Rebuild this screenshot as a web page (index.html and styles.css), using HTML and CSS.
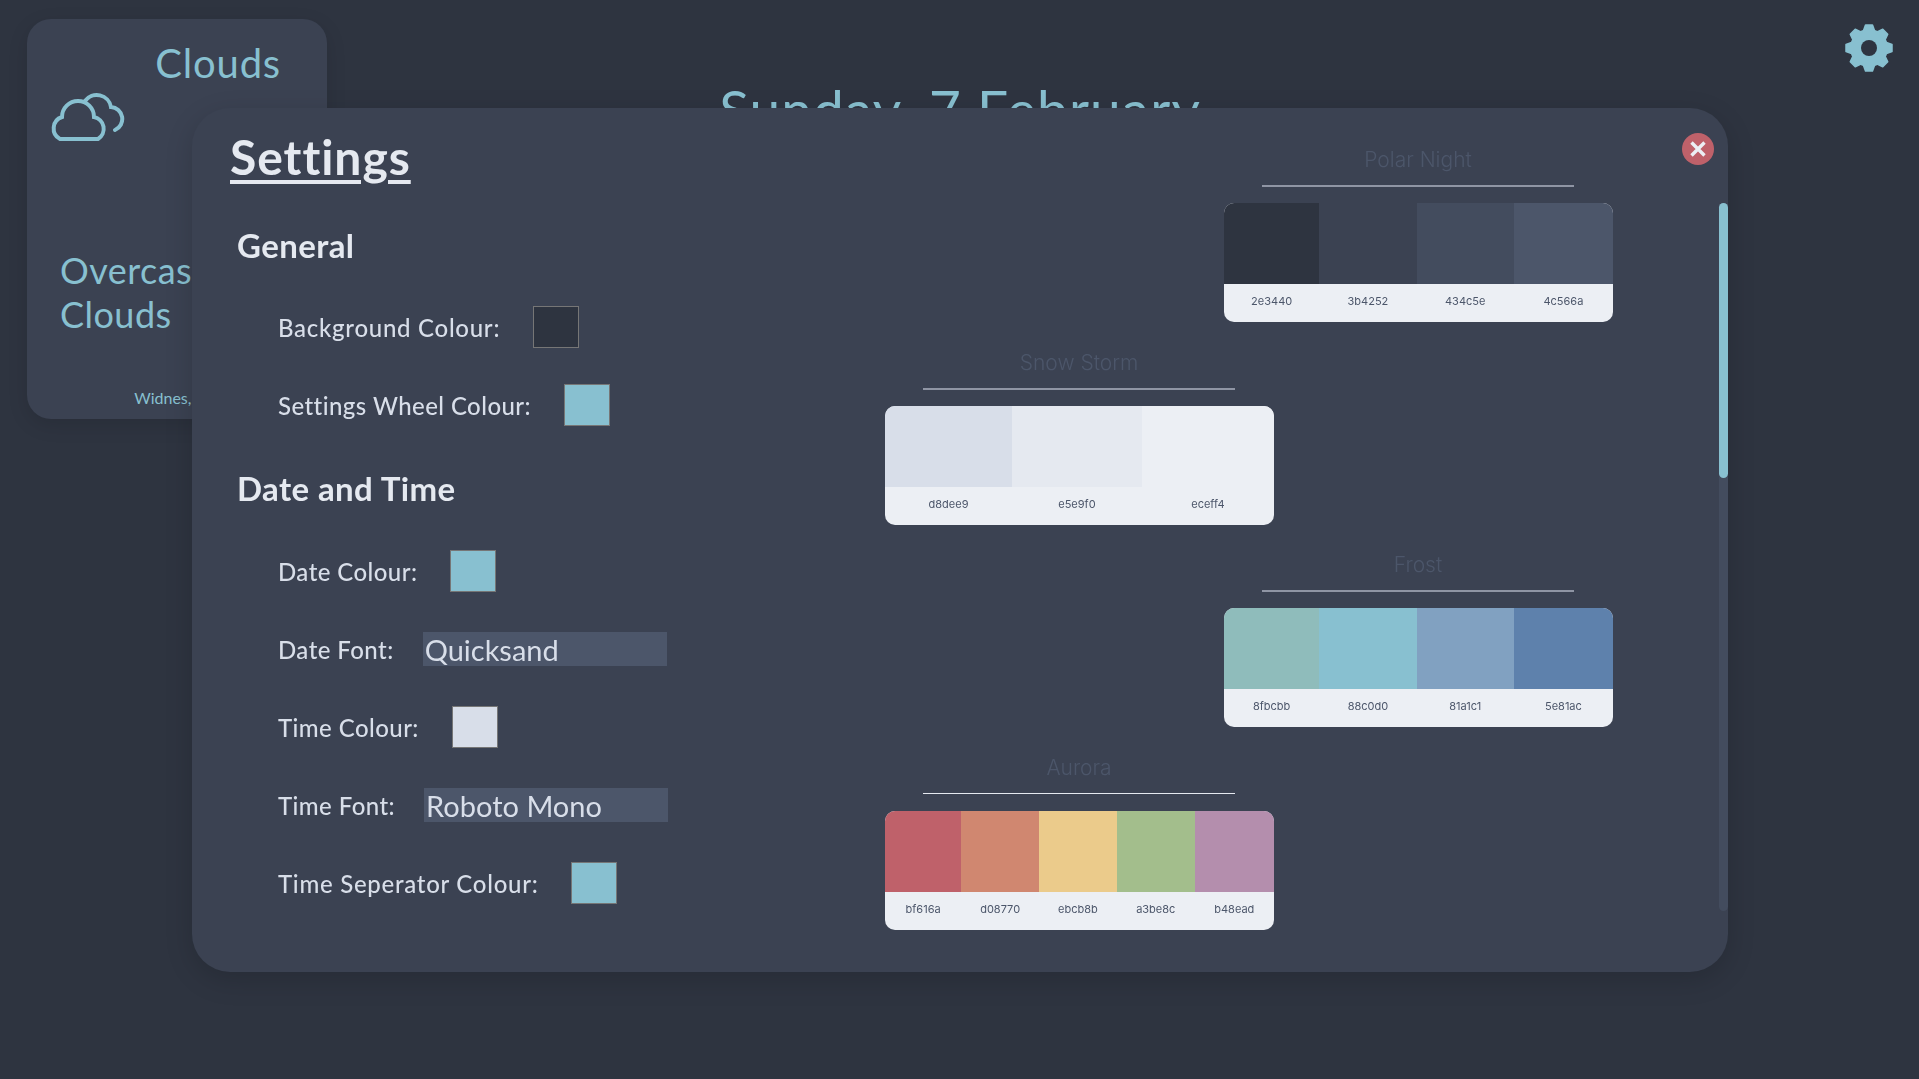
FILE: index.html
```html
<!DOCTYPE html>
<html lang="en">
<head>
    <meta charset="UTF-8">
    <meta name="viewport" content="width=device-width, initial-scale=1.0">
    <title>Weather Dashboard</title>
    <link rel="stylesheet" href="styles.css">
</head>
<body>
    <div id="dashboard">
        <div class="weather-card">
            <div class="weather-title">Clouds</div>
            <svg class="weather-icon" viewBox="0 0 80 52" width="80" height="52" fill="none" stroke="#88c0d0" stroke-width="4" stroke-linecap="round">
                <path d="M13 46 H51 A12 12 0 0 0 47 24 A16 16 0 0 0 15 24 A12 12 0 0 0 13 46 Z"/>
                <path d="M38 8 A14.5 14.5 0 0 1 64 14 A12 12 0 0 1 68 37"/>
            </svg>
            <div class="weather-desc">Overcast Clouds</div>
            <div class="weather-place">Widnes, UK</div>
        </div>
        <div class="date">Sunday, 7 February</div>
        <button class="gear-btn" aria-label="Settings">
            <svg viewBox="0 0 48 48" width="48" height="48">
                <defs>
                    <path id="tooth" d="M20.5 1 h7 l2.5 7 h-12 z" stroke="#88c0d0" stroke-width="1.5" stroke-linejoin="round"/>
                </defs>
                <g fill="#88c0d0">
                    <circle cx="24" cy="24" r="19"/>
                    <use href="#tooth"/>
                    <use href="#tooth" transform="rotate(45 24 24)"/>
                    <use href="#tooth" transform="rotate(90 24 24)"/>
                    <use href="#tooth" transform="rotate(135 24 24)"/>
                    <use href="#tooth" transform="rotate(180 24 24)"/>
                    <use href="#tooth" transform="rotate(225 24 24)"/>
                    <use href="#tooth" transform="rotate(270 24 24)"/>
                    <use href="#tooth" transform="rotate(315 24 24)"/>
                </g>
                <circle cx="24" cy="24" r="8" fill="#2e3440"/>
            </svg>
        </button>
    </div>

    <div id="settings">
        <div class="settings-left">
            <h1>Settings</h1>

            <h2>General</h2>
            <div class="rows">
                <div class="row">
                    <label class="wide">Background Colour:</label>
                    <input type="color" value="#2e3440">
                </div>
                <div class="row">
                    <label>Settings Wheel Colour:</label>
                    <input type="color" value="#88c0d0">
                </div>
            </div>

            <h2>Date and Time</h2>
            <div class="rows">
                <div class="row">
                    <label>Date Colour:</label>
                    <input type="color" value="#88c0d0">
                </div>
                <div class="row">
                    <label>Date Font:</label>
                    <input type="text" value="Quicksand">
                </div>
                <div class="row">
                    <label>Time Colour:</label>
                    <input type="color" value="#d8dee9">
                </div>
                <div class="row">
                    <label>Time Font:</label>
                    <input type="text" value="Roboto Mono">
                </div>
                <div class="row">
                    <label class="wide">Time Seperator Colour:</label>
                    <input type="color" value="#88c0d0">
                </div>
            </div>
        </div>

        <div class="palettes">
            <div class="palette right">
                <h3>Polar Night</h3>
                <div class="rule"></div>
                <div class="colours">
                    <div class="colour"><div class="chip c-2e3440"></div><span>2e3440</span></div>
                    <div class="colour"><div class="chip c-3b4252"></div><span>3b4252</span></div>
                    <div class="colour"><div class="chip c-434c5e"></div><span>434c5e</span></div>
                    <div class="colour"><div class="chip c-4c566a"></div><span>4c566a</span></div>
                </div>
            </div>
            <div class="palette">
                <h3>Snow Storm</h3>
                <div class="rule"></div>
                <div class="colours">
                    <div class="colour"><div class="chip c-d8dee9"></div><span>d8dee9</span></div>
                    <div class="colour"><div class="chip c-e5e9f0"></div><span>e5e9f0</span></div>
                    <div class="colour"><div class="chip c-eceff4"></div><span>eceff4</span></div>
                </div>
            </div>
            <div class="palette right">
                <h3>Frost</h3>
                <div class="rule"></div>
                <div class="colours">
                    <div class="colour"><div class="chip c-8fbcbb"></div><span>8fbcbb</span></div>
                    <div class="colour"><div class="chip c-88c0d0"></div><span>88c0d0</span></div>
                    <div class="colour"><div class="chip c-81a1c1"></div><span>81a1c1</span></div>
                    <div class="colour"><div class="chip c-5e81ac"></div><span>5e81ac</span></div>
                </div>
            </div>
            <div class="palette">
                <h3>Aurora</h3>
                <div class="rule"></div>
                <div class="colours">
                    <div class="colour"><div class="chip c-bf616a"></div><span>bf616a</span></div>
                    <div class="colour"><div class="chip c-d08770"></div><span>d08770</span></div>
                    <div class="colour"><div class="chip c-ebcb8b"></div><span>ebcb8b</span></div>
                    <div class="colour"><div class="chip c-a3be8c"></div><span>a3be8c</span></div>
                    <div class="colour"><div class="chip c-b48ead"></div><span>b48ead</span></div>
                </div>
            </div>
        </div>

        <button class="close-btn" aria-label="Close">
            <svg viewBox="0 0 16 16" width="16" height="16" stroke="#eceff4" stroke-width="3.4">
                <path d="M1.5 1.5 L14.5 14.5 M14.5 1.5 L1.5 14.5"/>
            </svg>
        </button>
        <div class="scroll-track"><div class="scroll-thumb"></div></div>
    </div>
</body>
</html>
```

FILE: styles.css
```css
* {
    box-sizing: border-box;
}
body {
    margin: 0;
    height: 100vh;
    overflow: hidden;
    background-color: #2e3440;
    font-family: 'Lato', 'Noto Sans', sans-serif;
    color: #88c0d0;
}
#dashboard {
    display: grid;
    grid-template-columns: 1fr auto 1fr;
    align-items: start;
    padding: 19px 26px 0 27px;
}
.weather-card {
    display: flex;
    flex-direction: column;
    width: 300px;
    height: 400px;
    padding: 20px 0 0 23px;
    background-color: #3b4252;
    border-radius: 24px;
    box-shadow: 0 6px 20px rgba(0, 0, 0, 0.12);
}
.weather-title {
    align-self: flex-end;
    margin-right: 46px;
    font-size: 40px;
    line-height: 48px;
    letter-spacing: 0.02em;
}
.weather-icon {
    flex: none;
    margin: 6px 0 0 -3px;
}
.weather-desc {
    width: 190px;
    margin: 103px 0 0 10px;
    font-size: 36px;
    line-height: 44px;
    letter-spacing: 0.013em;
}
.weather-place {
    margin: 52px 2px 0 -23px;
    font-size: 16px;
    text-align: center;
}
.date {
    margin-top: 56px;
    font-size: 55px;
    line-height: 68px;
    letter-spacing: 0.02em;
}
.gear-btn {
    justify-self: end;
    margin-top: 5px;
    padding: 0;
    border: none;
    background: none;
}
.gear-btn svg {
    display: block;
}

/* settings modal */
#settings {
    position: fixed;
    left: 192px;
    top: 108px;
    width: 1536px;
    height: 864px;
    display: flex;
    background-color: #3b4252;
    border-radius: 38px;
    box-shadow: 0 8px 28px rgba(0, 0, 0, 0.16);
    color: #d8dee9;
}
.settings-left {
    width: 693px;
    padding: 19px 0 0 38px;
}
h1 {
    display: inline-block;
    margin: 0 0 38px;
    font-size: 48px;
    line-height: 60px;
    font-weight: 700;
    letter-spacing: 0.02em;
    color: #e5e9f0;
    text-decoration: underline;
    text-decoration-thickness: 4px;
    text-underline-offset: 5px;
}
h2 {
    margin: 0 0 41px 7px;
    font-size: 33px;
    line-height: 40px;
    font-weight: 700;
    letter-spacing: 0.012em;
    color: #e5e9f0;
}
h2 + .rows + h2 {
    margin-bottom: 42px;
}
.rows {
    display: flex;
    flex-direction: column;
    gap: 36px;
    margin: 0 0 42px 48px;
}
.row {
    display: flex;
    align-items: center;
    gap: 33px;
    height: 42px;
}
label {
    font-size: 24px;
    font-weight: 500;
    letter-spacing: 0.018em;
}
label.wide {
    letter-spacing: 0.03em;
}
input[type="color"] {
    width: 46px;
    height: 42px;
    padding: 0;
    border: 1px solid #767676;
    background: none;
}
input[type="color"]::-webkit-color-swatch-wrapper {
    padding: 0;
}
input[type="color"]::-webkit-color-swatch {
    border: none;
}
input[type="text"] {
    width: 244px;
    height: 34px;
    margin-left: -4px;
    padding: 0 2px;
    border: none;
    background-color: #4c566a;
    color: #d8dee9;
    font-family: inherit;
    font-size: 29px;
    letter-spacing: 0;
}

/* nord palette */
.palettes {
    display: flex;
    flex-direction: column;
    gap: 27.5px;
    width: 728px;
    padding-top: 39px;
    font-family: 'Inter', sans-serif;
}
.palette {
    width: 389px;
}
.palette.right {
    align-self: flex-end;
}
h3 {
    margin: 0 1px 0 0;
    font-size: 21px;
    line-height: 26px;
    font-weight: 300;
    text-align: center;
    color: #4c566a;
}
.rule {
    width: 312px;
    height: 2px;
    margin: 12px auto 16px;
    transform: translateX(-1px);
    background-color: #8f95a4;
}
.palette:last-child .rule {
    height: 1px;
    margin-bottom: 17px;
    background-color: #e5e9f0;
}
.colours {
    display: flex;
    height: 119px;
    border-radius: 10px;
    overflow: hidden;
    background-color: #eceff4;
}
.colour {
    flex: 1 1 0;
    display: flex;
    flex-direction: column;
    align-items: center;
}
.colour:first-child {
    flex-grow: 0.98;
}
.colour:last-child {
    flex-grow: 1.02;
}
.chip {
    width: 100%;
    height: 81px;
}
.colour span {
    margin-top: 10px;
    font-size: 11px;
    line-height: 14px;
    color: #4c566a;
}
.c-2e3440 { background-color: #2e3440; }
.c-3b4252 { background-color: #3b4252; }
.c-434c5e { background-color: #434c5e; }
.c-4c566a { background-color: #4c566a; }
.c-d8dee9 { background-color: #d8dee9; }
.c-e5e9f0 { background-color: #e5e9f0; }
.c-eceff4 { background-color: #eceff4; }
.c-8fbcbb { background-color: #8fbcbb; }
.c-88c0d0 { background-color: #88c0d0; }
.c-81a1c1 { background-color: #81a1c1; }
.c-5e81ac { background-color: #5e81ac; }
.c-bf616a { background-color: #bf616a; }
.c-d08770 { background-color: #d08770; }
.c-ebcb8b { background-color: #ebcb8b; }
.c-a3be8c { background-color: #a3be8c; }
.c-b48ead { background-color: #b48ead; }

.close-btn {
    position: absolute;
    left: 1490px;
    top: 25px;
    display: flex;
    align-items: center;
    justify-content: center;
    width: 32px;
    height: 32px;
    padding: 0;
    border: none;
    border-radius: 50%;
    background-color: #bf616a;
}
.scroll-track {
    position: absolute;
    right: 0;
    top: 95px;
    width: 9px;
    height: 708px;
    border-radius: 5px;
    background-color: #434c5e;
}
.scroll-thumb {
    height: 275px;
    border-radius: 5px;
    background-color: #88c0d0;
}
```
